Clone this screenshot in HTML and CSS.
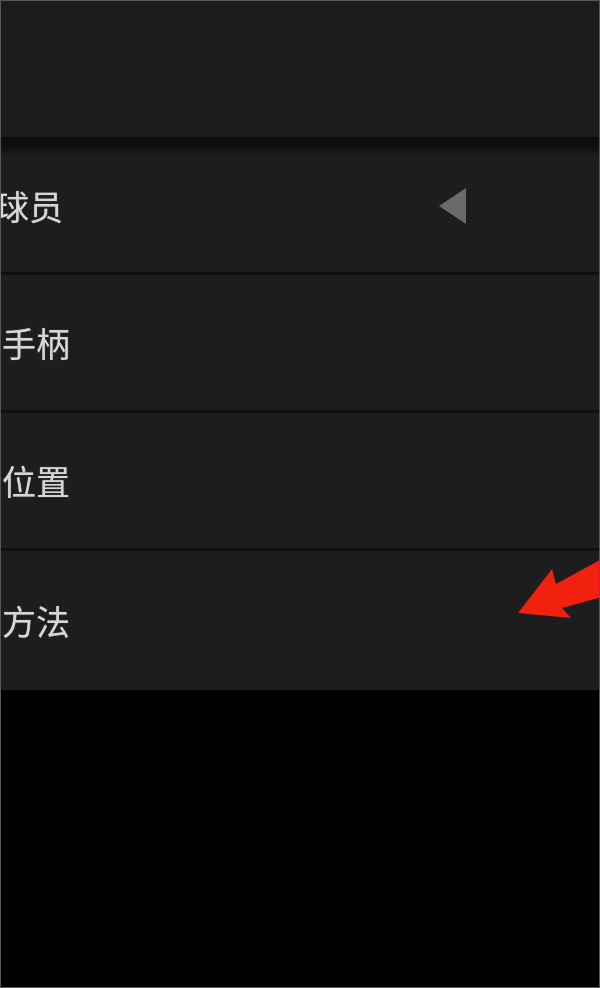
FILE: index.html
```html
<!DOCTYPE html>
<html lang="zh-CN">
<head>
<meta charset="utf-8">
<title>设置</title>
<link rel="stylesheet" href="styles.css">
</head>
<body>
<div class="frame">
  <div class="header"></div>
  <div class="menu">
    <div class="row row-first">
      <span class="label label-cut">球员</span>
      <span class="caret"></span>
    </div>
    <div class="row"><span class="label">手柄</span></div>
    <div class="row"><span class="label">位置</span></div>
    <div class="row row-last"><span class="label">方法</span></div>
  </div>
  <div class="blank"></div>
  <svg class="pointer" width="600" height="988" viewBox="0 0 600 988" aria-hidden="true">
    <polygon points="518,613 552,569 556,584 602,559 602,597 562,608 571,618" fill="#f2200f"/>
  </svg>
</div>
</body>
</html>
```

FILE: styles.css
```css
html, body {
  margin: 0;
  padding: 0;
  background: #000;
}

.frame {
  position: relative;
  width: 600px;
  height: 988px;
  box-sizing: border-box;
  border: 1px solid #575757;
  background: #000;
  overflow: hidden;
  display: flex;
  flex-direction: column;
  font-family: "Noto Sans CJK SC", "Noto Sans", sans-serif;
}

.header {
  height: 136px;
  flex: none;
  background: #1b1b1b;
}

.menu {
  flex: none;
  display: flex;
  flex-direction: column;
}

.row {
  height: 138px;
  box-sizing: border-box;
  border-bottom: 3px solid #101010;
  background: #1d1d1d;
  display: flex;
  align-items: center;
  justify-content: space-between;
  padding-right: 133px;
  overflow: hidden;
}

.row-first {
  padding-top: 3px;
  background: linear-gradient(to bottom, #0c0c0c 0px, #0e0e0e 8px, #1d1d1d 19px, #1d1d1d 100%);
}

.row-last {
  height: 139px;
  border-bottom: none;
}

.label {
  color: #d6d6d6;
  font-size: 34px;
  line-height: 1;
  margin-left: 1px;
  text-shadow: 0 0 1px rgba(214, 214, 214, 0.6);
  filter: blur(0.35px);
}

.label-cut {
  margin-left: -6px;
}

.caret {
  width: 0;
  height: 0;
  border-top: 18px solid transparent;
  border-bottom: 18px solid transparent;
  border-right: 27px solid #6a6a6a;
  filter: blur(0.5px);
}

.blank {
  flex: 1;
  background: #000;
}

.pointer {
  position: absolute;
  left: -1px;
  top: -1px;
  filter: blur(0.4px);
}
```
